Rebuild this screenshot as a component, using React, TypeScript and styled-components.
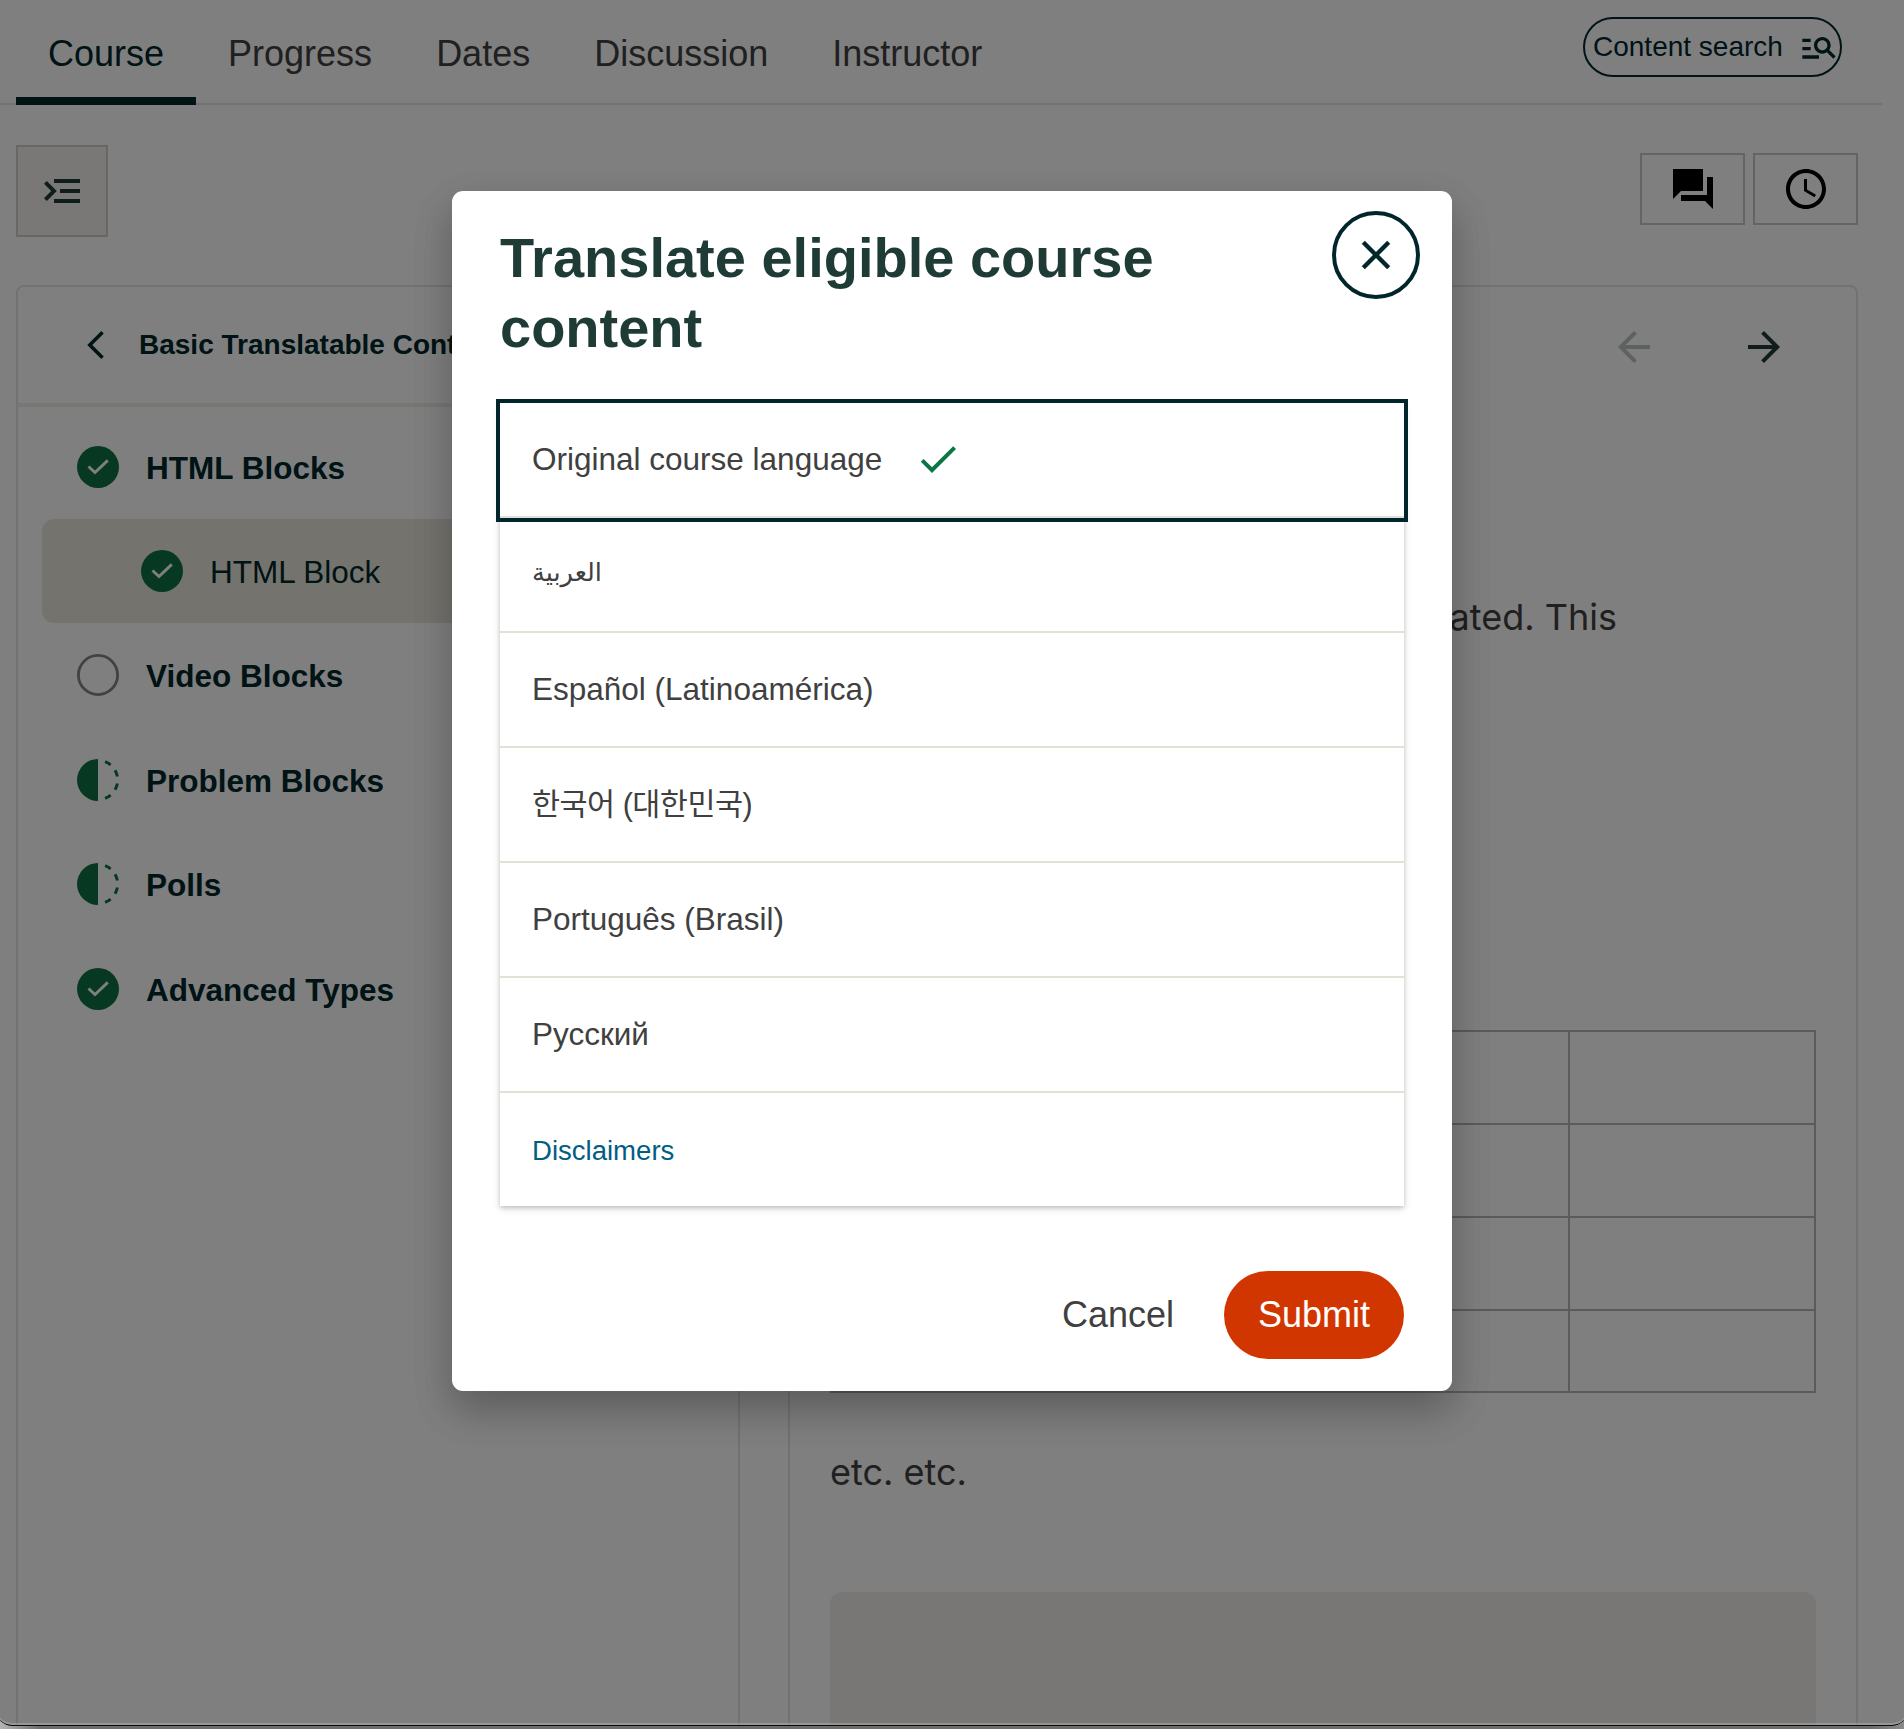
import React from 'react';
import styled, { createGlobalStyle, css } from 'styled-components';

const GlobalStyle = createGlobalStyle`
  *, *::before, *::after { box-sizing: border-box; }
  html, body { margin: 0; padding: 0; background: #909090; overflow: hidden; }
  button { font: inherit; margin: 0; padding: 0; cursor: pointer; }
  svg { display: block; flex: none; }
`;

const ink = '#00262b';
const heading = '#1f3b36';
const body = '#404040';
const green = '#0e7044';
const line = '#e4e4e4';

const Screen = styled.div`
  width: 1904px;
  height: 1729px;
  overflow: hidden;
  font-family: 'Liberation Sans', Arial, 'Noto Sans CJK KR', sans-serif;
  color: ${body};
  background: linear-gradient(to right, #b5b5b5 0, #6c6c6c 40px, #6c6c6c 1870px, #8a8a8a 1904px);
`;

const Window = styled.div`
  position: relative;
  width: 1912px;
  height: 1726px;
  margin-left: -4px;
  padding: 0 4px;
  overflow: hidden;
  background: #fff;
  border-radius: 0 0 16px 16px;
`;

const WindowEdge = styled.div`
  position: absolute;
  inset: 0;
  border-radius: 0 0 16px 16px;
  border-bottom: 1px solid #0a0a0a;
  box-shadow: inset 0 -2px 0 rgba(175, 175, 175, 0.5);
`;

const TabBar = styled.header`
  display: flex;
  justify-content: space-between;
  width: 1882px;
  height: 105px;
  padding: 0 40px 0 16px;
  box-shadow: inset 0 -2px 0 ${line};
`;

const Tabs = styled.nav`
  display: flex;
  align-items: flex-end;
`;

const Tab = styled.a<{ $active?: boolean }>`
  padding: 0 32px 15px;
  font-size: 36px;
  line-height: 56px;
  color: ${(p) => (p.$active ? ink : body)};
  border-bottom: 8px solid ${(p) => (p.$active ? ink : 'transparent')};
`;

const SearchButton = styled.button`
  display: flex;
  align-items: center;
  justify-content: space-between;
  width: 259px;
  height: 60px;
  margin-top: 17px;
  padding: 0 1px 0 8px;
  font-size: 28px;
  line-height: 40px;
  color: ${ink};
  background: transparent;
  border: 2px solid ${ink};
  border-radius: 30px;
`;

const Toolbar = styled.div`
  display: flex;
  justify-content: space-between;
  align-items: flex-start;
  width: 1858px;
  height: 180px;
  padding: 40px 0 0 16px;
`;

const IconButton = styled.button`
  display: flex;
  align-items: center;
  justify-content: center;
`;

const OutlineToggle = styled(IconButton)`
  width: 92px;
  height: 92px;
  color: ${heading};
  background: #f4f1ec;
  border: 2px solid #d0cecb;
`;

const ToolGroup = styled.div`
  display: flex;
  gap: 8px;
  padding-top: 8px;
`;

const ToolButton = styled(IconButton)`
  width: 105px;
  height: 72px;
  color: #000;
  background: transparent;
  border: 2px solid #c9c9c9;
`;

const Columns = styled.main`
  display: flex;
  gap: 48px;
  width: 1858px;
  height: 1500px;
  padding-left: 16px;
`;

const panel = css`
  border: 2px solid ${line};
  border-radius: 8px;
`;

const Sidebar = styled.aside`
  ${panel}
  width: 724px;
`;

const SidebarHeader = styled.div`
  display: flex;
  align-items: center;
  gap: 26px;
  height: 120px;
  padding: 0 0 0 61px;
  border-bottom: 4px solid #f2efe9;
  font-size: 28px;
  font-weight: 700;
  line-height: 40px;
  color: ${ink};
`;

const Outline = styled.ul`
  list-style: none;
  margin: 0;
  padding: 7.4px 24px 0;
`;

const OutlineRow = styled.li<{ $nested?: boolean }>`
  display: flex;
  align-items: center;
  gap: 27px;
  height: 104.4px;
  padding-left: ${(p) => (p.$nested ? 99 : 35)}px;
  border-radius: 12px;
  font-size: 31.5px;
  font-weight: ${(p) => (p.$nested ? 400 : 700)};
  color: ${ink};
  background: ${(p) => (p.$nested ? '#eae6dd' : 'transparent')};
  & > span { padding-top: 3px; }
`;

const Unit = styled.section`
  ${panel}
  width: 1070px;
  padding: 0 40px;
  font-family: Inter, sans-serif;
  font-size: 36px;
  line-height: 56px;
`;

const UnitNav = styled.div`
  display: flex;
  justify-content: flex-end;
  gap: 82px;
  padding: 36px 28px 0 0;
  color: ${heading};
`;

const PrevArrow = styled.span`
  opacity: 0.3;
`;

const Paragraph = styled.p`
  margin: 218px 199px 0 0;
  text-align: right;
`;

const Grid = styled.table`
  width: 986px;
  height: 363px;
  margin-top: 385px;
  border-collapse: collapse;
  table-layout: fixed;
  td { border: 2px solid #b6b6b6; padding: 0; }
`;

const Closing = styled.p`
  margin: 51px 0 0;
`;

const Placeholder = styled.div`
  height: 200px;
  margin-top: 92px;
  border-radius: 12px;
  background: #f2efeb;
`;

const Backdrop = styled.div`
  position: absolute;
  inset: 0;
  display: flex;
  justify-content: center;
  align-items: flex-start;
  padding-top: 191px;
  background: rgba(0, 0, 0, 0.5);
`;

const Dialog = styled.div`
  display: flex;
  flex-direction: column;
  width: 1000px;
  height: 1200px;
  padding: 20px 48px 32px;
  background: #fff;
  border-radius: 11px;
  box-shadow: 0 20px 40px rgba(0, 0, 0, 0.15), 0 16px 40px rgba(0, 0, 0, 0.15);
`;

const DialogHeader = styled.div`
  display: flex;
  justify-content: space-between;
  align-items: flex-start;
  height: 192px;
  margin-right: -16px;
`;

const Title = styled.h2`
  width: 720px;
  margin: 12px 0 0;
  font-size: 56px;
  line-height: 70px;
  font-weight: 700;
  color: ${heading};
`;

const CloseButton = styled(IconButton)`
  width: 88px;
  height: 88px;
  color: ${ink};
  background: transparent;
  border: 4px solid ${ink};
  border-radius: 50%;
  & path { stroke: currentColor; stroke-width: 0.25; }
`;

const LanguageList = styled.div`
  box-shadow: 0 2px 4px rgba(0, 0, 0, 0.15), 0 2px 8px rgba(0, 0, 0, 0.15);
`;

const LanguageRow = styled.div<{ $focused?: boolean }>`
  display: flex;
  align-items: center;
  gap: 32px;
  height: 115px;
  padding: 0 32px;
  font-size: 31.5px;
  border-bottom: 2px solid #e3e0d5;
  outline: ${(p) => (p.$focused ? `4px solid ${ink}` : 'none')};
  &:last-child { height: 113px; border-bottom: 0; }
`;

const Check = styled.span`
  margin-bottom: 1px;
  color: #0c7546;
`;

const Arabic = styled.span`
  padding-bottom: 5px;
  font-family: 'DejaVu Sans', sans-serif;
  font-size: 25.6px;
`;

const Korean = styled.span`
  padding-bottom: 6px;
  font-family: 'Liberation Sans', 'Noto Sans CJK KR', sans-serif;
  font-size: 30.5px;
  letter-spacing: -0.5px;
`;

const DisclaimerLink = styled.a`
  padding-top: 3px;
  font-size: 27.56px;
  color: #005e82;
`;

const Actions = styled.div`
  display: flex;
  justify-content: flex-end;
  gap: 16px;
  margin-top: auto;
`;

const ActionButton = styled.button<{ $primary?: boolean }>`
  width: 180px;
  height: 88px;
  border: 0;
  border-radius: 44px;
  font-size: 36px;
  color: ${(p) => (p.$primary ? '#fff' : body)};
  background: ${(p) => (p.$primary ? '#d23600' : 'transparent')};
`;

const Glyph = ({ d, size = 48, flip = false }: { d: string; size?: number; flip?: boolean }) => (
  <svg width={size} height={size} viewBox="0 0 24 24" fill="currentColor">
    <path d={d} transform={flip ? 'matrix(-1 0 0 1 24 0)' : undefined} />
  </svg>
);

const paths = {
  menuOpen: 'M3 18h13v-2H3v2zm0-5h10v-2H3v2zm0-7v2h13V6H3zm18 9.59L17.42 12 21 8.41 19.59 7l-5 5 5 5L21 15.59z',
  manageSearch:
    'M7 9H2V7h5v2zm0 3H2v2h5v-2zm13.59 7-3.83-3.83c-.8.52-1.74.83-2.76.83-2.76 0-5-2.24-5-5s2.24-5 5-5 5 2.24 5 5c0 1.02-.31 1.96-.83 2.75L22 17.59 20.59 19zM17 11c0-1.65-1.35-3-3-3s-3 1.35-3 3 1.35 3 3 3 3-1.35 3-3zM2 19h10v-2H2v2z',
  forum: 'M22 6h-3v9H6v3h12l4 4V6zm-5 7V2H2v15l4-4h11z',
  clock:
    'M11.99 2C6.47 2 2 6.48 2 12s4.47 10 9.99 10C17.52 22 22 17.52 22 12S17.52 2 11.99 2zM12 20c-4.42 0-8-3.58-8-8s3.58-8 8-8 8 3.58 8 8-3.58 8-8 8zm.5-13H11v6l5.25 3.15.75-1.23-4.5-2.67V7z',
  back: 'M17.51 3.87 15.73 2.1 5.84 12l9.9 9.9 1.77-1.77L9.38 12l8.13-8.13z',
  arrowLeft: 'M20 11H7.83l5.59-5.59L12 4l-8 8 8 8 1.41-1.41L7.83 13H20v-2z',
  close: 'M19 6.41 17.59 5 12 10.59 6.41 5 5 6.41 10.59 12 5 17.59 6.41 19 12 13.41 17.59 19 19 17.59 13.41 12 19 6.41z',
  check: 'M9 16.17 4.83 12l-1.42 1.41L9 19 21 7l-1.41-1.41L9 16.17z',
};

type Status = 'done' | 'todo' | 'partial';

const StatusIcon = ({ status }: { status: Status }) => (
  <svg width="42" height="42" viewBox="0 0 42 42" fill="none">
    {status === 'done' && (
      <>
        <circle cx="21" cy="21" r="21" fill={green} />
        <path d="M11.5 20.5 18 26.6 30.8 14.4" stroke="#fff" strokeWidth="2.9" />
      </>
    )}
    {status === 'todo' && <circle cx="21" cy="21" r="19.6" stroke="#88847c" strokeWidth="2.8" />}
    {status === 'partial' && (
      <>
        <path d="M21 0a21 21 0 0 0 0 42z" fill={green} />
        <path
          d="M28.05 2.64A19.65 19.65 0 0 1 33.63 5.95M38.02 11.2A19.65 19.65 0 0 1 40.37 17.6M40.37 24.4A19.65 19.65 0 0 1 38.02 30.8M33.63 36.05A19.65 19.65 0 0 1 28.05 39.36"
          stroke={green}
          strokeWidth="3"
        />
      </>
    )}
  </svg>
);

const tabs = ['Course', 'Progress', 'Dates', 'Discussion', 'Instructor'];

const outline: { label: string; status: Status; nested?: boolean }[] = [
  { label: 'HTML Blocks', status: 'done' },
  { label: 'HTML Block', status: 'done', nested: true },
  { label: 'Video Blocks', status: 'todo' },
  { label: 'Problem Blocks', status: 'partial' },
  { label: 'Polls', status: 'partial' },
  { label: 'Advanced Types', status: 'done' },
];

const rowHeights = [93, 93, 93, 82];

export default function App() {
  return (
    <Screen>
      <GlobalStyle />
      <Window>
        <TabBar>
          <Tabs>
            {tabs.map((t, i) => (
              <Tab key={t} $active={i === 0}>{t}</Tab>
            ))}
          </Tabs>
          <SearchButton>
            <span>Content search</span>
            <Glyph d={paths.manageSearch} size={40} />
          </SearchButton>
        </TabBar>
        <Toolbar>
          <OutlineToggle><Glyph d={paths.menuOpen} flip /></OutlineToggle>
          <ToolGroup>
            <ToolButton><Glyph d={paths.forum} /></ToolButton>
            <ToolButton><Glyph d={paths.clock} /></ToolButton>
          </ToolGroup>
        </Toolbar>
        <Columns>
          <Sidebar>
            <SidebarHeader>
              <Glyph d={paths.back} size={34} />
              <span>Basic Translatable Content</span>
            </SidebarHeader>
            <Outline>
              {outline.map((o) => (
                <OutlineRow key={o.label} $nested={o.nested}>
                  <StatusIcon status={o.status} />
                  <span>{o.label}</span>
                </OutlineRow>
              ))}
            </Outline>
          </Sidebar>
          <Unit>
            <UnitNav>
              <PrevArrow><Glyph d={paths.arrowLeft} /></PrevArrow>
              <Glyph d={paths.arrowLeft} flip />
            </UnitNav>
            <Paragraph>translated. This</Paragraph>
            <Grid>
              <tbody>
                {rowHeights.map((h, i) => (
                  <tr key={i} style={{ height: h }}>
                    <td /><td /><td /><td />
                  </tr>
                ))}
              </tbody>
            </Grid>
            <Closing>etc. etc.</Closing>
            <Placeholder />
          </Unit>
        </Columns>
        <Backdrop>
          <Dialog role="dialog">
            <DialogHeader>
              <Title>Translate eligible course content</Title>
              <CloseButton><Glyph d={paths.close} /></CloseButton>
            </DialogHeader>
            <LanguageList>
              <LanguageRow $focused>
                <span>Original course language</span>
                <Check><Glyph d={paths.check} /></Check>
              </LanguageRow>
              <LanguageRow><Arabic lang="ar">العربية</Arabic></LanguageRow>
              <LanguageRow>Español (Latinoamérica)</LanguageRow>
              <LanguageRow><Korean lang="ko">한국어 (대한민국)</Korean></LanguageRow>
              <LanguageRow>Português (Brasil)</LanguageRow>
              <LanguageRow>Русский</LanguageRow>
              <LanguageRow><DisclaimerLink>Disclaimers</DisclaimerLink></LanguageRow>
            </LanguageList>
            <Actions>
              <ActionButton>Cancel</ActionButton>
              <ActionButton $primary>Submit</ActionButton>
            </Actions>
          </Dialog>
        </Backdrop>
        <WindowEdge />
      </Window>
    </Screen>
  );
}
